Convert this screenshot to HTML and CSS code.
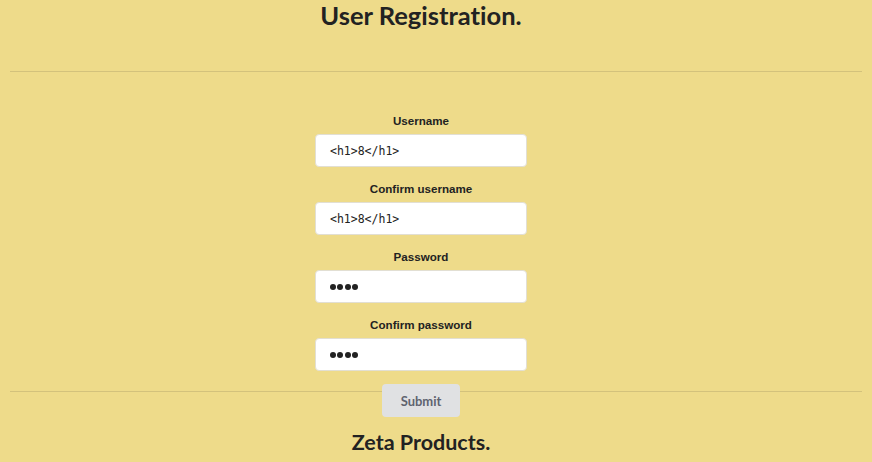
FILE: index.html
```html
<!DOCTYPE html>
<html>
<head>
<meta charset="utf-8">
<link rel="stylesheet" href="styles.css">
</head>
<body>
<div class="page">
  <div class="center">
    <h1 class="title">User Registration.</h1>
  </div>
  <hr class="rule">
  <form class="center form">
    <div class="field">
      <label class="label">Username</label>
      <div class="input">&lt;h1&gt;8&lt;/h1&gt;</div>
    </div>
    <div class="field">
      <label class="label">Confirm username</label>
      <div class="input">&lt;h1&gt;8&lt;/h1&gt;</div>
    </div>
    <div class="field">
      <label class="label">Password</label>
      <div class="input dots"><span class="dot"></span><span class="dot"></span><span class="dot"></span><span class="dot"></span></div>
    </div>
    <div class="field">
      <label class="label">Confirm password</label>
      <div class="input dots"><span class="dot"></span><span class="dot"></span><span class="dot"></span><span class="dot"></span></div>
    </div>
    <div class="actions"><button type="button" class="submit">Submit</button></div>
  </form>
  <hr class="rule rule-bottom">
  <div class="center">
    <h2 class="footer-title">Zeta Products.</h2>
  </div>
</div>
</body>
</html>
```
FILE: styles.css
```css
html, body {
  margin: 0;
  padding: 0;
  background: #eedb8a;
}
.page {
  padding: 0 10px;
  color: #222;
  font-family: Lato, "Open Sans", sans-serif;
  font-variant-ligatures: none;
}
.center {
  margin-right: 30px;
}
.title {
  margin: 0;
  font-size: 25.5px;
  font-weight: 700;
  line-height: 30px;
  text-align: center;
}
.rule {
  border: 0;
  border-top: 1px solid #d3c27c;
  margin: 41px 0 0;
  height: 0;
}
.form {
  display: flex;
  flex-direction: column;
  align-items: center;
  padding-top: 42px;
}
.field {
  display: flex;
  flex-direction: column;
  align-items: center;
  margin-bottom: 15px;
}
.label {
  font-family: "Liberation Sans", Arial, sans-serif;
  font-weight: 700;
  font-size: 11.6px;
  line-height: 14px;
  margin-bottom: 6px;
  color: #222;
}
.input {
  box-sizing: border-box;
  width: 212px;
  height: 33px;
  background: #fff;
  border: 1px solid #e2dfd3;
  border-radius: 4px;
  padding: 0 14px;
  display: flex;
  align-items: center;
  font-family: "DejaVu Sans Mono", monospace;
  font-size: 11.5px;
  color: #222;
}
.dots {
  gap: 1.3px;
}
.dot {
  width: 6px;
  height: 6px;
  border-radius: 50%;
  background: #222;
}
.actions {
  margin-top: -2px;
}
.submit {
  width: 78px;
  height: 33px;
  border: 0;
  border-radius: 4px;
  background: #e0e1e3;
  color: #5f6470;
  font-family: Lato, sans-serif;
  font-weight: 700;
  font-size: 13px;
  padding: 0;
}
.rule-bottom {
  margin-top: -26px;
}
.footer-title {
  margin: 38px 0 0;
  font-size: 21.5px;
  font-weight: 700;
  line-height: 24px;
  text-align: center;
}
```
